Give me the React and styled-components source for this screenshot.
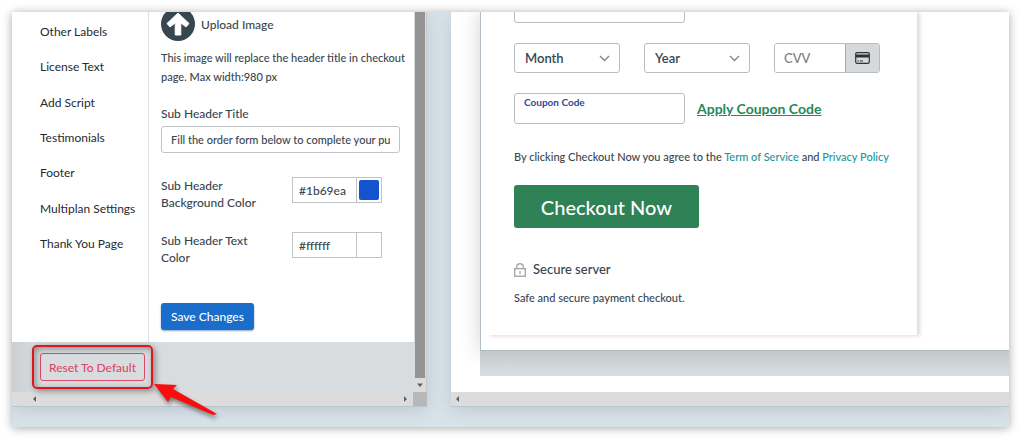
import React from "react";
import styled, { createGlobalStyle } from 'styled-components';

const GlobalStyle = createGlobalStyle`
  * {
    box-sizing: border-box;
  }
  body {
    margin: 0;
    background: #ffffff;
    color: #3a464e;
    font-family: Lato, "Liberation Sans", sans-serif;
    font-size: 13px;
    font-weight: 500;
  }
  button, input, select {
    font: inherit;
    color: inherit;
    margin: 0;
  }
`
const Page = styled.div`
  padding: 12px;
`
const Frame = styled.main`
  display: grid;
  grid-template-columns: 415px 1fr;
  gap: 24px;
  padding-bottom: 20px;
  min-height: calc(100vh - 24px);
  overflow: hidden;
  background: #d8e3e9;
  box-shadow: 0 1px 9px rgba(0, 0, 0, 0.35);
`
const Panel = styled.section`
  display: flex;
  flex-direction: column;
  min-width: 0;
  background: #ffffff;
  border-bottom: 1px solid #b9c6cd;
  box-shadow: 0 3px 16px rgba(90, 100, 130, 0.22);
`
const PanelBody = styled.div`
  display: flex;
  flex: 1;
`
const Editor = styled.div`
  display: flex;
  flex-direction: column;
  flex: 1;
  min-width: 0;
`
const Columns = styled.div`
  display: grid;
  grid-template-columns: 137px 1fr;
  flex: 1;
`
const Nav = styled.nav`
  display: flex;
  flex-direction: column;
  justify-content: space-between;
  padding: 2px 0 81px 28px;
  border-right: 1px solid #dcdfe1;
`
const NavLink = styled.a`
  color: #1f2a31;
  font-size: 12px;
  font-weight: 400;
  line-height: 35px;
  text-decoration: none;
  white-space: nowrap;
`
const Settings = styled.form`
  display: flex;
  flex-direction: column;
  align-items: flex-start;
  padding: 0 14px 10px 12px;
`
const Upload = styled.button`
  display: flex;
  align-items: center;
  gap: 6px;
  margin-top: -5px;
  padding: 0;
  border: 0;
  background: none;
  font-size: 12px;
`
const Hint = styled.p`
  margin: 7px -10px 19px 0;
  font-size: 11px;
  line-height: 19px;
`
const Label = styled.label`
  width: 110px;
  font-size: 12px;
  line-height: 17px;
`
const TextInput = styled.input`
  width: 100%;
  height: 27px;
  margin: 4px 0 24px;
  padding: 0 9px;
  border: 1px solid #bfc3c6;
  border-radius: 3px;
  background: #ffffff;
  font-size: 11px;
`
const ColorRow = styled.div`
  display: flex;
  align-items: flex-start;
  justify-content: space-between;
  width: 221px;
  margin-bottom: 21px;
`
const ColorField = styled.div`
  display: flex;
  width: 90px;
  height: 26px;
  border: 1px solid #bfc3c6;
`
const ColorInput = styled.input`
  width: 64px;
  padding: 0 6px;
  border: 0;
  border-right: 1px solid #bfc3c6;
  font-size: 12px;
`
const Swatch = styled.button`
  flex: 1;
  margin: 2px;
  padding: 0;
  border: 0;
  border-radius: 2px;
  background: ${props => props.$color};
`
const SaveButton = styled.button`
  height: 27px;
  margin-top: 16px;
  padding: 0 10px;
  border: 0;
  border-radius: 3px;
  background: #1a6dcb;
  box-shadow: 0 1px 2px rgba(26, 80, 160, 0.5);
  color: #ffffff;
  font-size: 12px;
`
const EditorFooter = styled.footer`
  display: flex;
  padding: 11px 28px;
  background: linear-gradient(90deg, #cbcfd2, #d8dcdf 24px);
`
const Highlighted = styled.div`
  position: relative;
  display: flex;
`
const HighlightBox = styled.span`
  position: absolute;
  inset: -8px;
  z-index: 1;
  border: 2px solid #e3141b;
  border-radius: 5px;
  box-shadow: 2px 2px 6px rgba(0, 0, 0, 0.4), inset 2px 2px 6px rgba(0, 0, 0, 0.35);
  pointer-events: none;
`
const Arrow = styled.svg`
  position: absolute;
  left: 100%;
  top: 100%;
  z-index: 2;
  overflow: visible;
  filter: drop-shadow(1px 3px 2px rgba(0, 0, 0, 0.45));
  pointer-events: none;
`
const ResetButton = styled.button`
  height: 28px;
  padding: 0 8px;
  border: 1px solid #dd4a68;
  border-radius: 3px;
  background: transparent;
  color: #dc4765;
  font-size: 12px;
  white-space: nowrap;
`
const VScroll = styled.div`
  display: flex;
  flex-direction: column;
  width: 13px;
  border-right: 1px solid #c3cbd0;
  background: #dcdcdc;
`
const Thumb = styled.div`
  flex: 1;
  margin: 0 1px;
  background: #939393;
`
const ScrollEnd = styled.div`
  display: flex;
  align-items: center;
  justify-content: center;
  height: 14px;
`
const HScroll = styled.div`
  display: flex;
  align-items: center;
  justify-content: space-between;
  height: 14px;
  padding-left: ${props => props.$inset};
  background: #dcdcdc;
`
const Corner = styled.div`
  display: flex;
  align-items: center;
  gap: 4px;
  height: 14px;
  &::after {
    content: "";
    width: 14px;
    height: 14px;
    background: #b8b8b8;
  }
`
const Preview = styled.div`
  flex: 1;
  min-width: 0;
  padding: 0 0 16px 29px;
`
const PreviewPage = styled.div`
  padding: 0 0 15px 6px;
  border-left: 1px solid #b4bfc5;
  border-bottom: 1px solid #aeb9bf;
  background: #ffffff;
  box-shadow: 0 0 18px rgba(70, 80, 85, 0.25);
`
const PreviewBase = styled.div`
  height: 25px;
  position: relative;
  background: linear-gradient(#c3c8cb, #d7dbde 20px);
`
const Checkout = styled.form`
  display: flex;
  flex-direction: column;
  align-items: flex-start;
  max-width: 430px;
  padding: 0 37px 29px 27px;
  background: #ffffff;
  box-shadow: 3px 1px 4px rgba(0, 0, 0, 0.14);
  clip-path: inset(0 -8px -8px 0);
`
const CardNumber = styled.input`
  width: 171px;
  height: 31px;
  margin-top: -20px;
  padding: 0 10px;
  border: 1px solid #b9bdc0;
  border-radius: 3px;
`
const CardRow = styled.div`
  display: grid;
  grid-template-columns: repeat(3, 1fr);
  gap: 24px;
  width: 100%;
  margin: 20px 0;
`
const SelectWrap = styled.div`
  position: relative;
  height: 30px;
`
const Select = styled.select`
  appearance: none;
  width: 100%;
  height: 100%;
  padding: 0 10px;
  border: 1px solid #b9bdc0;
  border-radius: 3px;
  background: #ffffff;
  font-size: 13px;
  font-weight: 600;
`
const Chevron = styled.svg`
  position: absolute;
  right: 10px;
  top: 12px;
  pointer-events: none;
`
const CvvField = styled.div`
  display: flex;
  height: 30px;
  border: 1px solid #b9bdc0;
  border-radius: 3px;
  overflow: hidden;
`
const CvvInput = styled.input`
  flex: 1;
  min-width: 0;
  padding: 0 9px;
  border: 0;
  font-size: 13px;
  &::placeholder {
    color: #7b8083;
    opacity: 1;
  }
`
const CvvIcon = styled.span`
  display: flex;
  align-items: center;
  justify-content: center;
  width: 34px;
  border-left: 1px solid #a9aeb1;
  background: #d5d9db;
`
const CouponRow = styled.div`
  display: flex;
  align-items: center;
  gap: 12px;
`
const CouponField = styled.div`
  display: flex;
  flex-direction: column;
  width: 171px;
  height: 31px;
  padding: 2px 9px;
  border: 1px solid #b9bdc0;
  border-radius: 3px;
`
const CouponLabel = styled.label`
  color: #2d4a96;
  font-size: 10px;
  font-weight: 700;
  line-height: 13px;
`
const CouponInput = styled.input`
  width: 100%;
  height: 12px;
  padding: 0;
  border: 0;
  font-size: 10px;
`
const ApplyLink = styled.a`
  color: #24895b;
  font-size: 14px;
  font-weight: 700;
  line-height: 17px;
  white-space: nowrap;
`
const Terms = styled.p`
  margin: 25px 0 20px;
  font-size: 11px;
  line-height: 16px;
  white-space: nowrap;
`
const TermsLink = styled.a`
  color: #1c959c;
  text-decoration: none;
`
const CheckoutButton = styled.button`
  width: 185px;
  height: 43px;
  padding: 0;
  border: 0;
  border-radius: 3px;
  background: #2e8256;
  color: #ffffff;
  font-size: 20px;
`
const Secure = styled.div`
  display: flex;
  align-items: center;
  gap: 7px;
  margin-top: 33px;
  font-size: 13px;
  line-height: 17px;
`
const Safe = styled.p`
  margin: 12px 0 0;
  font-size: 11px;
  line-height: 16px;
`

const navItems = [
  'Other Labels',
  'License Text',
  'Add Script',
  'Testimonials',
  'Footer',
  'Multiplan Settings',
  'Thank You Page',
];

const ScrollArrow = ({ d }) => (
  <svg width="8" height="8" viewBox="0 0 8 8" aria-hidden="true">
    <path d={d} fill="#606060" />
  </svg>
);

const CardSelect = ({ label }) => (
  <SelectWrap>
    <Select aria-label={label}>
      <option>{label}</option>
    </Select>
    <Chevron width="11" height="7" viewBox="0 0 11 7" fill="none" stroke="#7d8589" strokeWidth="1.3">
      <path d="M1 1 5.5 5.5 10 1" />
    </Chevron>
  </SelectWrap>
);

const ColorSetting = ({ id, label, value, color }) => (
  <ColorRow>
    <Label htmlFor={id}>{label}</Label>
    <ColorField>
      <ColorInput id={id} defaultValue={value} />
      <Swatch type="button" aria-label={label} $color={color} />
    </ColorField>
  </ColorRow>
);

const EditorPanel = () => (
  <Panel>
    <PanelBody>
      <Editor>
        <Columns>
          <Nav>
            {navItems.map(item => (
              <NavLink key={item} href="#">{item}</NavLink>
            ))}
          </Nav>
          <Settings>
            <Upload type="button">
              <svg width="34" height="34" viewBox="0 0 34 34" aria-hidden="true">
                <circle cx="17" cy="17" r="17" fill="#37474f" />
                <path d="M17 6 28 16.5 25 20 19.8 15.8V28H14.2V15.8L9 20 6 16.5Z" fill="#fff" stroke="#fff" strokeLinejoin="round" />
              </svg>
              Upload Image
            </Upload>
            <Hint>This image will replace the header title in checkout page. Max width:980 px</Hint>
            <Label htmlFor="sub-title">Sub Header Title</Label>
            <TextInput id="sub-title" defaultValue="Fill the order form below to complete your purchase" />
            <ColorSetting id="sub-bg" label="Sub Header Background Color" value="#1b69ea" color="#1552cf" />
            <ColorSetting id="sub-text" label="Sub Header Text Color" value="#ffffff" color="#ffffff" />
            <SaveButton type="button">Save Changes</SaveButton>
          </Settings>
        </Columns>
        <EditorFooter>
          <Highlighted>
            <ResetButton type="button">Reset To Default</ResetButton>
            <HighlightBox />
            <Arrow width="74" height="36" viewBox="0 0 74 36" aria-hidden="true">
              <path d="M9 3 32 4 28 8 72 33 68 34 26 16 23 21Z" fill="#f90d0d" />
            </Arrow>
          </Highlighted>
        </EditorFooter>
      </Editor>
      <VScroll>
        <Thumb />
        <ScrollEnd>
          <ScrollArrow d="M1 2.5H7L4 6Z" />
        </ScrollEnd>
      </VScroll>
    </PanelBody>
    <HScroll $inset="19px">
      <ScrollArrow d="M5 1V7L2 4Z" />
      <Corner>
        <ScrollArrow d="M3 1V7L6 4Z" />
      </Corner>
    </HScroll>
  </Panel>
);

const PreviewPanel = () => (
  <Panel>
    <Preview>
      <PreviewPage>
        <Checkout>
          <CardNumber aria-label="Card number" />
          <CardRow>
            <CardSelect label="Month" />
            <CardSelect label="Year" />
            <CvvField>
              <CvvInput aria-label="CVV" placeholder="CVV" />
              <CvvIcon>
                <svg width="15" height="12" viewBox="0 0 15 12" aria-hidden="true">
                  <rect x="0.7" y="0.7" width="13.6" height="10.6" rx="1.2" fill="none" stroke="#2c3338" strokeWidth="1.2" />
                  <path d="M1 2.6H14V5.4H1Z" fill="#2c3338" />
                  <path d="M2.5 9H4M5 9H8" stroke="#2c3338" />
                </svg>
              </CvvIcon>
            </CvvField>
          </CardRow>
          <CouponRow>
            <CouponField>
              <CouponLabel htmlFor="coupon">Coupon Code</CouponLabel>
              <CouponInput id="coupon" />
            </CouponField>
            <ApplyLink href="#">Apply Coupon Code</ApplyLink>
          </CouponRow>
          <Terms>
            By clicking Checkout Now you agree to the <TermsLink href="#">Term of Service</TermsLink> and <TermsLink href="#">Privacy Policy</TermsLink>
          </Terms>
          <CheckoutButton type="button">Checkout Now</CheckoutButton>
          <Secure>
            <svg width="12" height="14" viewBox="0 0 12 14" fill="none" stroke="#a3a9ad" strokeWidth="1.4" aria-hidden="true">
              <rect x="0.7" y="5.7" width="10.6" height="7.6" />
              <path d="M2.7 5.5V4a3.3 3.3 0 0 1 6.6 0v1.5M6 8v3" />
            </svg>
            Secure server
          </Secure>
          <Safe>Safe and secure payment checkout.</Safe>
        </Checkout>
      </PreviewPage>
      <PreviewBase />
    </Preview>
    <HScroll $inset="3px">
      <ScrollArrow d="M5 1V7L2 4Z" />
    </HScroll>
  </Panel>
);

const App = () => {
  return (
    <>
      <GlobalStyle />
      <Page>
        <Frame>
          <EditorPanel />
          <PreviewPanel />
        </Frame>
      </Page>
    </>
  );
};
export default App;
